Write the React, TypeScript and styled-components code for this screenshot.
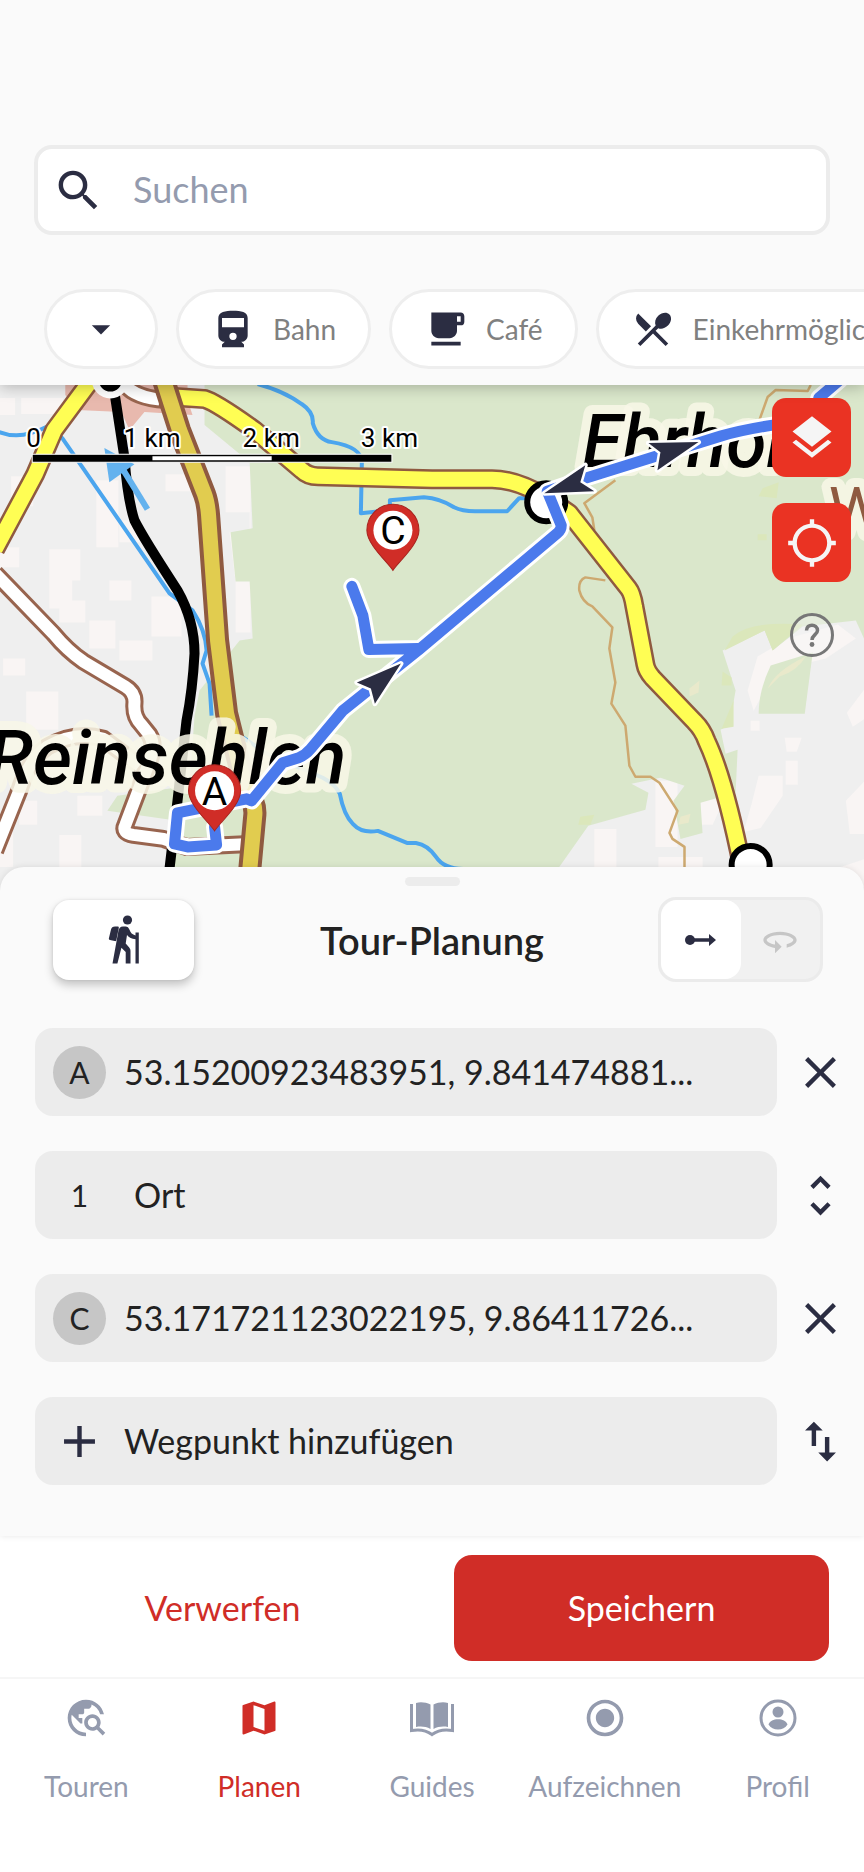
import React, { useState } from "react";
import styled, { createGlobalStyle } from "styled-components";
import {
  MdAdd,
  MdArrowDropDown,
  MdClose,
  MdFreeBreakfast,
  MdImportExport,
  MdLayers,
  MdLocationSearching,
  MdMap,
  MdRadioButtonChecked,
  MdRestaurantMenu,
  MdSearch,
  MdTravelExplore,
  MdUnfoldMore,
} from "react-icons/md";

const ink = "#2b2d42";
const red = "#d02d27";
const muted = "#949bae";

const GlobalStyle = createGlobalStyle`
  *, *::before, *::after { box-sizing: border-box; }
  body { margin: 0; background: #ffffff; }
  button, input { font: inherit; color: inherit; }
  button { border: 0; padding: 0; background: none; cursor: pointer; }
  svg { display: block; flex: none; }
`;

const Screen = styled.div`
  display: flex;
  flex-direction: column;
  min-height: 100vh;
  overflow-x: hidden;
  font-family: Lato, "Open Sans", sans-serif;
  font-size: 34px;
  line-height: 42px;
  color: #222222;
`;

const Header = styled.header`
  position: relative;
  z-index: 1;
  display: flex;
  flex-direction: column;
  gap: 54px;
  padding: 145px 0 16px;
  background: #fafafa;
  box-shadow: 0 2px 14px rgba(0, 0, 0, 0.25);
`;

const SearchBox = styled.label`
  display: flex;
  align-items: center;
  gap: 28px;
  height: 90px;
  margin: 0 34px;
  padding: 0 14px;
  border: 4px solid #ececec;
  border-radius: 18px;
  background: #ffffff;
  color: ${ink};
`;

const SearchInput = styled.input`
  flex: 1;
  min-width: 0;
  border: 0;
  outline: 0;
  padding: 0 0 2px;
  background: none;
  font-size: 36px;
  &::placeholder { color: ${muted}; opacity: 1; }
`;

const Chips = styled.div`
  display: flex;
  gap: 18px;
  padding-left: 44px;
  overflow: hidden;
`;

const Chip = styled.button`
  display: flex;
  flex: none;
  align-items: center;
  gap: 18px;
  height: 80px;
  padding: 0 32px;
  border: 3px solid #eeeeee;
  border-radius: 40px;
  background: #ffffff;
  font-size: 28px;
  color: #808080;
  svg { color: ${ink}; }
`;

const MapArea = styled.section`
  position: relative;
  flex: 1 0 505px;
  display: flex;
  height: 505px;
  overflow: hidden;
`;

const MapCanvas = styled.svg`
  width: 100%;
  height: 100%;
`;

const MapTools = styled.div`
  position: absolute;
  top: 13px;
  right: 13px;
  display: flex;
  flex-direction: column;
  align-items: center;
  gap: 26px;
`;

const MapButton = styled.button<{ $plain?: boolean }>`
  display: grid;
  place-items: center;
  width: 79px;
  height: ${(p) => (p.$plain ? "54px" : "79px")};
  border-radius: 14px;
  background: ${(p) => (p.$plain ? "none" : "#ea3323")};
  color: ${(p) => (p.$plain ? "#777777" : "#f5f5f5")};
`;

const Sheet = styled.section`
  position: relative;
  z-index: 1;
  margin-top: -24px;
  padding: 10px 0 51px;
  border-radius: 24px 24px 0 0;
  background: #fafafa;
  box-shadow: 0 0 6px rgba(0, 0, 0, 0.1);
`;

const Handle = styled.div`
  width: 55px;
  height: 9px;
  margin: 0 auto;
  border-radius: 5px;
  background: #ececec;
`;

const SheetHead = styled.div`
  display: grid;
  grid-template-columns: 1fr auto 1fr;
  align-items: center;
  margin: 11px 41px 46px;
`;

const ModeButton = styled.button`
  display: grid;
  place-items: center;
  width: 141px;
  height: 80px;
  margin-left: 12px;
  border-radius: 16px;
  background: #ffffff;
  color: ${ink};
  box-shadow: 0 5px 10px rgba(0, 0, 0, 0.22), 0 0 3px rgba(0, 0, 0, 0.1);
`;

const Title = styled.h1`
  margin: 0;
  font-size: 38px;
  font-weight: 600;
`;

const Toggle = styled.div`
  display: flex;
  justify-self: end;
  width: 165px;
  height: 85px;
  border: 3px solid #ebebeb;
  border-radius: 18px;
  background: #f1f1f1;
`;

const ToggleOption = styled.button<{ $active?: boolean }>`
  display: grid;
  flex: 1;
  place-items: center;
  border-radius: 16px;
  background: ${(p) => (p.$active ? "#ffffff" : "none")};
  color: ${(p) => (p.$active ? ink : "#c6c6c6")};
`;

const Stops = styled.div`
  display: flex;
  flex-direction: column;
  gap: 35px;
  padding: 0 17px 0 35px;
`;

const StopRow = styled.div`
  display: flex;
  align-items: center;
  gap: 17px;
`;

const StopField = styled.label<{ $indent?: boolean }>`
  display: flex;
  flex: 1;
  align-items: center;
  gap: ${(p) => (p.$indent ? "28px" : "18px")};
  min-width: 0;
  height: 88px;
  padding: 0 18px;
  border-radius: 18px;
  background: #ececec;
`;

const AddStop = styled(StopField).attrs({ as: "button" })`
  text-align: left;
  svg { color: ${ink}; }
`;

const StopInput = styled.input`
  flex: 1;
  min-width: 0;
  padding: 0;
  border: 0;
  outline: 0;
  background: none;
  text-overflow: ellipsis;
  &::placeholder { color: #222222; opacity: 1; }
`;

const StopMark = styled.span<{ $filled?: boolean }>`
  display: grid;
  flex: none;
  place-items: center;
  width: 53px;
  height: 53px;
  border-radius: 50%;
  background: ${(p) => (p.$filled ? "#c6c6c6" : "none")};
  font-size: 30px;
`;

const RowAction = styled.button`
  display: grid;
  flex: none;
  place-items: center;
  width: 53px;
  height: 53px;
  color: ${ink};
`;

const Actions = styled.div`
  display: grid;
  grid-template-columns: 1fr 1fr;
  gap: 44px;
  padding: 19px 35px 16px;
  background: #ffffff;
`;

const ActionButton = styled.button<{ $primary?: boolean }>`
  height: 106px;
  border-radius: 18px;
  background: ${(p) => (p.$primary ? red : "none")};
  color: ${(p) => (p.$primary ? "#ffffff" : red)};
`;

const BottomNav = styled.nav`
  display: grid;
  grid-template-columns: repeat(5, 1fr);
  height: 195px;
  padding-top: 17px;
  border-top: 2px solid #f6f6f6;
  background: #ffffff;
`;

const NavLink = styled.a<{ $active?: boolean }>`
  display: flex;
  flex-direction: column;
  align-items: center;
  gap: 25px;
  font-size: 28px;
  text-decoration: none;
  color: ${(p) => (p.$active ? red : muted)};
`;

const TrainIcon = ({ size }: { size: number }) => (
  <svg width={size} height={size} viewBox="0 0 24 24" fill="currentColor" aria-hidden="true">
    <path fillRule="evenodd" d="M12 2c-4 0-8 .5-8 4v9.500C4 17.430 5.570 19 7.500 19L6 20.500V22h12v-1.500L16.500 19c1.930 0 3.500-1.570 3.500-3.500V6c0-3.500-3.580-4-8-4zM12 18a2 2 0 1 1 0-4 2 2 0 0 1 0 4zM18 11H6V6h12z" />
  </svg>
);

const HikerIcon = () => (
  <svg width="32" height="50" viewBox="0 0 32 50" fill="currentColor" aria-hidden="true">
    <circle cx="19.500" cy="5" r="4.600" />
    <path d="M7 11.500h2.500c1.200 0 1.500.6 1.300 1.600L8.400 25c-.2 1-.8 1.300-1.700 1.100L2 25c-1-.2-1.300-.8-1.100-1.700L3 14.500c.5-2 1.700-3 4-3z" />
    <path d="M15 11.500h2.500c2 0 3.200 1.200 4 3.300 1 3 2.800 4.900 6 5.600V17.500h3.300v31h-3.300V24.300c-3.700-.4-6.500-1.800-8.500-4.300l-1.300 8.500 3.300 3.700c1 1.200 1.500 2.300 1.500 4v12.300h-4.800V37l-4.300-4.300-4 15.800H4.500l5.800-32c.6-3.300 2-5 4.700-5z" />
  </svg>
);

const HelpIcon = () => (
  <svg width="46" height="46" viewBox="0 0 46 46" aria-hidden="true">
    <circle cx="23" cy="23" r="20.500" fill="#f7f7f7" fillOpacity="0.4" stroke="currentColor" strokeWidth="3" />
    <path d="M17.500 18.500c0-7.300 11-7 11 0 0 4-5.500 4.500-5.500 9.500" fill="none" stroke="currentColor" strokeWidth="3.500" />
    <circle cx="23" cy="32.500" r="2.400" fill="currentColor" />
  </svg>
);

const LineIcon = () => (
  <svg width="32" height="16" viewBox="0 0 32 16" fill="currentColor" aria-hidden="true">
    <circle cx="5" cy="8" r="5" />
    <path d="M5 6.300h19V2l7 6-7 6V9.700H5z" />
  </svg>
);

const LoopIcon = () => (
  <svg width="40" height="40" viewBox="0 0 24 24" fill="currentColor" aria-hidden="true">
    <path d="M12 7C6.480 7 2 9.240 2 12c0 2.240 2.940 4.130 7 4.770V20l4-4-4-4v2.730c-3.150-.56-5-1.900-5-2.730 0-1.060 3.040-3 8-3s8 1.940 8 3c0 .73-1.460 1.890-4 2.530v2.050c3.530-.77 6-2.530 6-4.580 0-2.760-4.480-5-10-5z" />
  </svg>
);

const BookIcon = () => (
  <svg width="46" height="44" viewBox="0 0 46 44" aria-hidden="true">
    <path d="M7 7C12 5.600 17 6.500 21.500 8.500V33C17 30.500 12 30 7 31zM39 7C34 5.600 29 6.500 24.500 8.500V33C29 30.500 34 30 39 31z" fill="currentColor" />
    <path d="M2.500 8v26.500c8-1.500 14.500-.5 20.500 4 6-4.500 12.500-5.500 20.500-4V8" fill="none" stroke="currentColor" strokeWidth="3" />
  </svg>
);

const ProfileIcon = () => (
  <svg width="44" height="44" viewBox="0 0 44 44" aria-hidden="true">
    <circle cx="22" cy="22" r="17" fill="none" stroke="currentColor" strokeWidth="3" />
    <circle cx="22" cy="16" r="5.500" fill="currentColor" />
    <path d="M12.500 28.500c1.500-3.700 5-5.200 9.500-5.200s8 1.500 9.500 5.200c-2 3.200-5.500 5-9.500 5s-7.500-1.800-9.500-5z" fill="currentColor" />
  </svg>
);

const fieldPatches =
  "M0 398h16v17H0zM22 398h42v16H22zM12 476h22v30H12zM97 480h22v67H97zM120 520h22v22h-22zM50 549h31v31h-8v28H50zM0 547h20v20H0zM110 580h22v20h-22zM152 596h30v40h-30zM90 620h26v28H90zM4 658h22v17H4zM27 691h32v38H27zM166 474h34v17h-34zM226 466h25v166h-15v-50l-6-50h20v-20h-24zM120 640h33v20h-33zM60 600h26v22H60zM78 795h25v20H78zM20 800h18v24H20zM0 822h14v44H0zM60 834h22v32H60zM140 745h30v40h-30zM594 828h22v38h-22zM655 780h22v66h-22zM700 800l26-6-14 30h-12zM758 775h24v20l-22 32-17 4 8-28zM785 760h12v24h-12zM784 737h17l-5 14h-10zM750 720h9v10h-9zM658 856h44v10h-44zM845 800l19-20v53h-15zM846 712l18-24v30l-12 8zM780 886l84-28v28zM747 690l10-34 30-18 50-14 18 14-30 20-50 12-22 40z";

const yellowLeft = "M92 380L55 430 36 474-4 549";
const yellowTop = "M160 396L205 399Q216 402 255 430L302 470Q308 476 318 476L432 479H492Q516 479 546 497L569 513 628 588Q632 593 634 606L645 664Q646 670 652 677L694 721Q702 729 706 740 724 778 742 868";
const motorway = "M164 380L180 430 205 494Q208 502 209 515L218 640 227 713 245 785Q257 802 255 816L250 870";
const whiteLeft = "M-4 573L54 633Q68 650 84 661L126 686Q136 692 135 703 134 716 142 724L150 734Q156 744 151 758L137 795 126 824Q122 832 134 834L164 838 187 846 250 843";
const whiteInner = "M-4 850L20 790Q30 758 48 746 76 730 104 738L140 765";
const railway = "M115 392L125 457Q128 498 135 520 144 538 178 590 195 620 195 653 193 690 187 720L178 800 170 868";
const river = "M-2 431Q20 441 47 427L63 438 170 593 193 610Q206 630 207 650L203 663 210 683 212 715M238 733L267 753 323 777Q336 784 340 793 344 814 353 823 362 833 378 830L407 842H416Q428 844 436 856T463 868";
const riverTop = "M258 384Q284 391 302 404 314 412 313 423 318 440 332 442 362 447 362 462L361 513 390 510V500L424 497Q440 498 454 507 462 511 475 511H507L519 498H530";
const path = "M810 385L807 391 775 390 767 397 758 422M615 480L584 503 592 517 594 530M605 580L585 577Q578 580 579 590 582 602 592 606L612 627 609 648 615 682 611 703 625 725 629 765 635 776H650L659 782 677 810 669 832 672 838 684 846V868";
const route = "M772 425Q740 430 720 436L649 458 585 478 547 491 561 525Q561 530 557 533L418 650 343 710 311 748Q306 754 299 757L283 762 252 800 247 798 178 812 175 843 188 846 217 844 215 826M839 380L818 398M352 586L363 615 369 649 418 648";

const Pin = ({ x, y, letter }: { x: number; y: number; letter: string }) => (
  <g transform={`translate(${x} ${y})`}>
    <path d="M0 40C-6 31-26 14-26 0a26 26 0 0 1 52 0C26 14 6 31 0 40z" fill={red} stroke="#a7241f" strokeWidth="1" />
    <circle r="19.500" fill="#fff" />
    <text y="14" textAnchor="middle" fontSize="39">{letter}</text>
  </g>
);

const TourMap = () => (
  <MapCanvas viewBox="0 385 864 505" preserveAspectRatio="xMidYMid slice" role="img" aria-label="Karte" fontFamily="Roboto, sans-serif">
    <rect y="385" width="864" height="505" fill="#efefef" />
    <path d={fieldPatches} fill="#f9f5f4" />
    <path d="M205 385H864V640L855 620 802 626 772 650 764 630 722 650 735 690 729 724 720 729 725 753 737 749 735 792 700 802 702 832 680 838 673 800 684 785 660 777 631 783 648 792 645 809 588 825 559 866V890H172L178 820 108 810 118 795 190 785 195 715 200 690 240 640 253 638 250 581H236L231 532 253 528 250 462 205 425z" fill="#dae7cb" />
    <path d="M770 665L812 652 804 713H758Q758 690 770 665z" fill="#dae7cb" />
    <path d="M732 636Q750 620 802 624L772 650 764 630 724 650zM722 671l9 6v8h-10zM733 700v26l-12 2zM762 488l16-6-2 16-18-2zM580 816l14-2-4 10h-12zM757 534h9v6h-9z" fill="#dbe7bb" />
    <path d="M767 688q8-18 38-32-8 14-26 20zM689 688l10-8-1 12-9 4zM680 816l10-3-2 9-10 2z" fill="#e9e9cb" />
    <path d="M66 385H188V400L193 415 145 412 130 430 122 412 78 410 66 395z" fill="#e8b9ae" />
    <g fill="none" strokeLinejoin="round">
      <path d={path} stroke="#cda970" strokeWidth="2.500" />
      <path d={river} stroke="#4ba5ee" strokeWidth="4" />
      <path d={riverTop} stroke="#4ba5ee" strokeWidth="4" />
      <path d={whiteLeft} stroke="#98644e" strokeWidth="18" />
      <path d={whiteInner} stroke="#98644e" strokeWidth="18" />
      <path d={whiteLeft} stroke="#fff" strokeWidth="12" />
      <path d={whiteInner} stroke="#fff" strokeWidth="12" />
      <path d="M126 385Q136 398 166 400" stroke="#98644e" strokeWidth="18" />
      <path d="M126 385Q136 398 166 400" stroke="#fff" strokeWidth="12" />
      <path d={yellowLeft} stroke="#8f5a40" strokeWidth="20" />
      <path d={yellowTop} stroke="#8f5a40" strokeWidth="20" />
      <path d={yellowLeft} stroke="#fffe54" strokeWidth="15" />
      <path d={yellowTop} stroke="#fffe54" strokeWidth="15" />
      <path d={railway} stroke="#000" strokeWidth="10" />
      <path d={motorway} stroke="#8f5a40" strokeWidth="23" />
      <path d={motorway} stroke="#e1cc4f" strokeWidth="15" />
      <path d="M124 470L148 509" stroke="#63b2ee" strokeWidth="6" />
    </g>
    <path d="M105 448L135 464 110 482z" fill="#63b2ee" />
    <circle cx="111" cy="380" r="15" stroke="#fff" strokeWidth="7" />
    <circle cx="546" cy="502" r="19" fill="#fff" stroke="#000" strokeWidth="6" />
    <circle cx="750" cy="864" r="19" fill="#fff" stroke="#000" strokeWidth="6" />
    <g paintOrder="stroke" strokeWidth="18" strokeLinejoin="round" stroke="#f8f7e8" strokeOpacity="0.85">
      <g fontStyle="italic" fontWeight="500">
        <text x="-12" y="783" fontSize="75">Reinsehlen</text>
        <text x="582" y="467" fontSize="73">Ehrhorn</text>
      </g>
      <text x="828" y="532" fontSize="62" fill="#8f5a40">Wintermoor</text>
    </g>
    <g fill="none" strokeLinejoin="round" strokeLinecap="round">
      <path d={route} stroke="#fff" strokeWidth="17" />
      <path d={route} stroke="#4b7aec" strokeWidth="11" />
    </g>
    <path d="M401 663L357 682 371 688 375 703zM698 442L648 443 660 452 657 470zM544 493L585 465 580 482 594 491z" fill={ink} stroke="#fff" strokeWidth="5" strokeLinejoin="round" paintOrder="stroke" />
    <Pin x={393} y={530} letter="C" />
    <Pin x={215} y={790} letter="A" />
    <g paintOrder="stroke" stroke="#fff" strokeWidth="4" strokeLinejoin="round" fontSize="26">
      <text x="27" y="447">0</text>
      <text x="124" y="447">1 km</text>
      <text x="243" y="447">2 km</text>
      <text x="361" y="447">3 km</text>
    </g>
    <path d="M33 454H392V462H33z" stroke="#fff" strokeWidth="1" />
    <path d="M153 456H272V460H153z" fill="#fff" />
  </MapCanvas>
);

const chips = [
  { label: "Bahn", Icon: TrainIcon },
  { label: "Café", Icon: MdFreeBreakfast },
  { label: "Einkehrmöglichkeit", Icon: MdRestaurantMenu },
];

const navItems = [
  { label: "Touren", icon: <MdTravelExplore size={44} /> },
  { label: "Planen", icon: <MdMap size={44} />, active: true },
  { label: "Guides", icon: <BookIcon /> },
  { label: "Aufzeichnen", icon: <MdRadioButtonChecked size={44} /> },
  { label: "Profil", icon: <ProfileIcon /> },
];

export default function App() {
  const [loop, setLoop] = useState(false);
  return (
    <Screen>
      <GlobalStyle />
      <Header>
        <SearchBox>
          <MdSearch size={53} />
          <SearchInput type="text" placeholder="Suchen" aria-label="Suchen" />
        </SearchBox>
        <Chips>
          <Chip aria-label="Filter"><MdArrowDropDown size={44} /></Chip>
          {chips.map(({ label, Icon }) => (
            <Chip key={label}><Icon size={44} />{label}</Chip>
          ))}
        </Chips>
      </Header>
      <MapArea>
        <TourMap />
        <MapTools>
          <MapButton aria-label="Ebenen"><MdLayers size={52} /></MapButton>
          <MapButton aria-label="Standort"><MdLocationSearching size={52} /></MapButton>
          <MapButton $plain aria-label="Hilfe"><HelpIcon /></MapButton>
        </MapTools>
      </MapArea>
      <Sheet>
        <Handle />
        <SheetHead>
          <ModeButton aria-label="Wandern"><HikerIcon /></ModeButton>
          <Title>Tour-Planung</Title>
          <Toggle>
            <ToggleOption $active={!loop} aria-label="Strecke" onClick={() => setLoop(false)}><LineIcon /></ToggleOption>
            <ToggleOption $active={loop} aria-label="Rundtour" onClick={() => setLoop(true)}><LoopIcon /></ToggleOption>
          </Toggle>
        </SheetHead>
        <Stops>
          <StopRow>
            <StopField>
              <StopMark $filled>A</StopMark>
              <StopInput type="text" defaultValue="53.15200923483951, 9.841474881..." />
            </StopField>
            <RowAction aria-label="A entfernen"><MdClose size={53} /></RowAction>
          </StopRow>
          <StopRow>
            <StopField $indent>
              <StopMark>1</StopMark>
              <StopInput type="text" placeholder="Ort" />
            </StopField>
            <RowAction aria-label="Verschieben"><MdUnfoldMore size={53} /></RowAction>
          </StopRow>
          <StopRow>
            <StopField>
              <StopMark $filled>C</StopMark>
              <StopInput type="text" defaultValue="53.171721123022195, 9.86411726..." />
            </StopField>
            <RowAction aria-label="C entfernen"><MdClose size={53} /></RowAction>
          </StopRow>
          <StopRow>
            <AddStop><MdAdd size={53} />Wegpunkt hinzufügen</AddStop>
            <RowAction aria-label="Umkehren"><MdImportExport size={53} /></RowAction>
          </StopRow>
        </Stops>
      </Sheet>
      <Actions>
        <ActionButton>Verwerfen</ActionButton>
        <ActionButton $primary>Speichern</ActionButton>
      </Actions>
      <BottomNav>
        {navItems.map(({ label, icon, active }) => (
          <NavLink key={label} href="#" $active={active}>{icon}<span>{label}</span></NavLink>
        ))}
      </BottomNav>
    </Screen>
  );
}
